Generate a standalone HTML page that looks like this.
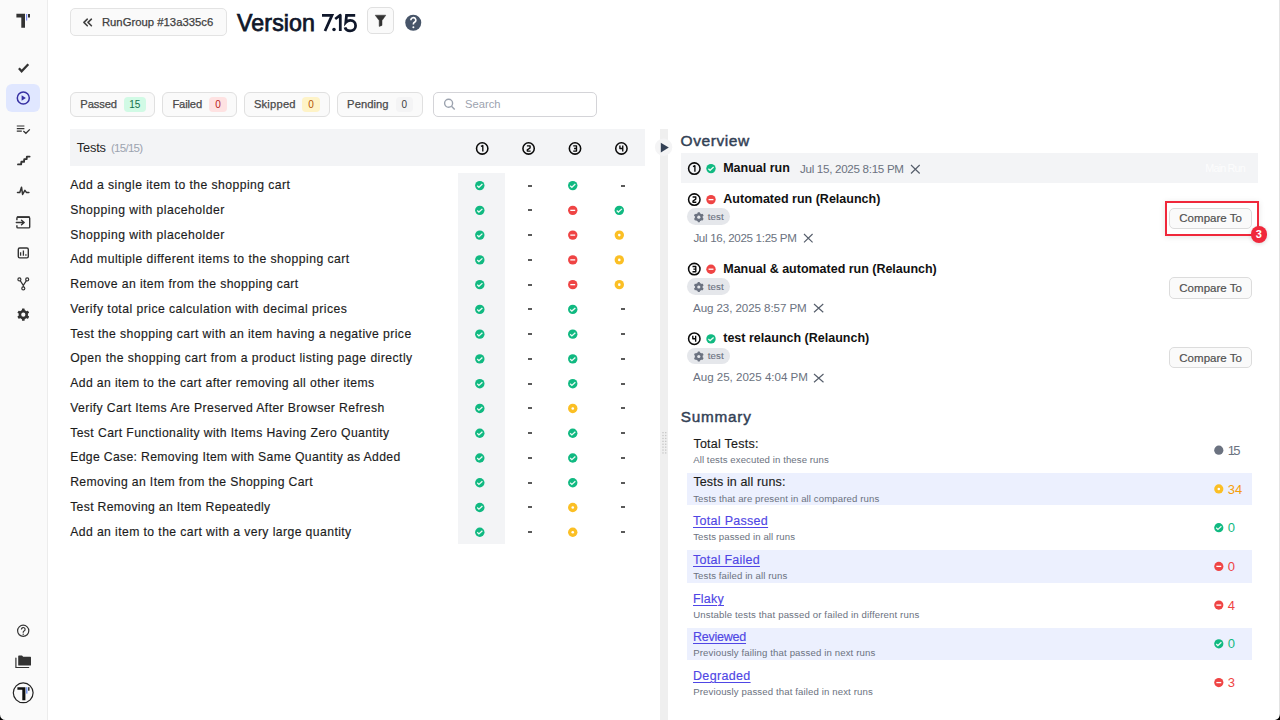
<!DOCTYPE html>
<html><head><meta charset="utf-8"><style>
html,body{margin:0;padding:0;width:1280px;height:720px;overflow:hidden;background:#fff;}
body{position:relative;font-family:'Liberation Sans', sans-serif;}
span{white-space:nowrap;}
svg{overflow:visible}
</style></head><body>
<div style="position:absolute;left:0px;top:0px;width:47px;height:720px;background:#fafafa"></div><div style="position:absolute;left:47px;top:0px;width:1px;height:720px;background:#ececec"></div><svg style="position:absolute;left:10px;top:8px" width="26" height="26" viewBox="10 8 26 26"><path d="M16.4 13.8H25V27.8H21.3V17.5H16.4z" fill="#333"/><rect x="26" y="14" width="1.2" height="6.5" fill="#7b8cf0"/><rect x="28" y="14" width="2" height="3.5" fill="#333"/></svg><svg style="position:absolute;left:10px;top:55px" width="28" height="25" viewBox="10 55 28 25"><path d="M18.9 68.3L21.6 71.2L28.3 64.2" fill="none" stroke="#333" stroke-width="2.3"/></svg><div style="position:absolute;left:6px;top:84px;width:34px;height:28px;background:#e0e7ff;border-radius:6px"></div><svg style="position:absolute;left:10px;top:86px" width="28" height="24" viewBox="10 86 28 24"><circle cx="23.3" cy="98" r="6" fill="none" stroke="#3730a3" stroke-width="1.5"/><path d="M21.6 95.2L25.9 98L21.6 100.8z" fill="#3730a3"/></svg><svg style="position:absolute;left:10px;top:118px" width="28" height="22" viewBox="10 118 28 22"><path d="M16.8 126H24.4M16.8 128.6H24.4M16.8 131.2H21.8" stroke="#333" stroke-width="1.2"/><path d="M23.4 131L25.9 133.3L29.8 129.4" fill="none" stroke="#333" stroke-width="1.3"/></svg><svg style="position:absolute;left:10px;top:150px" width="28" height="22" viewBox="10 150 28 22"><path d="M18 164.4H21.1L21.4 161.8H24L24.3 159.1H26.6L26.9 156.6H29.6" fill="none" stroke="#333" stroke-width="1.9" stroke-linecap="round" stroke-linejoin="round"/></svg><svg style="position:absolute;left:10px;top:180px" width="28" height="20" viewBox="10 180 28 20"><path d="M17.5 192.4H19.8L21.5 187.2L22.6 194.4L24.9 190.4L26.4 192.4H28.9" fill="none" stroke="#333" stroke-width="1.5" stroke-linecap="round" stroke-linejoin="round"/></svg><svg style="position:absolute;left:10px;top:210px" width="28" height="24" viewBox="10 210 28 24"><path d="M16.9 220.2V218.3Q16.9 217.3 17.9 217.3H28.8Q29.7 217.3 29.7 218.3V226.9Q29.7 227.9 28.8 227.9H17.9Q16.9 227.9 16.9 226.9V225.3" fill="none" stroke="#333" stroke-width="1.4"/><path d="M16.9 217.1H29.7" stroke="#333" stroke-width="1.8"/><path d="M16.3 222.5H24.2M21.5 220.2L24.2 222.5L21.5 224.8" fill="none" stroke="#333" stroke-width="1.4" stroke-linecap="round" stroke-linejoin="round"/></svg><svg style="position:absolute;left:10px;top:242px" width="28" height="22" viewBox="10 242 28 22"><rect x="18.3" y="248" width="10" height="9.9" rx="1.4" fill="none" stroke="#333" stroke-width="1.4"/><path d="M20.6 252.2V255.8M23.4 250.4V255.8M25.9 254.3V255.8" stroke="#333" stroke-width="1.3"/></svg><svg style="position:absolute;left:10px;top:272px" width="28" height="22" viewBox="10 272 28 22"><circle cx="19.4" cy="279.4" r="1.5" fill="none" stroke="#333" stroke-width="1.2"/><circle cx="27.2" cy="279.4" r="1.5" fill="none" stroke="#333" stroke-width="1.2"/><circle cx="23.3" cy="288.4" r="1.5" fill="none" stroke="#333" stroke-width="1.2"/><path d="M20.2 280.7L23.3 285.4L26.4 280.7M23.3 285.4V286.9" fill="none" stroke="#333" stroke-width="1.2"/></svg><svg style="position:absolute;left:10px;top:302px" width="28" height="26" viewBox="10 302 28 26"><g transform="translate(23.3 314.7)"><circle r="4.7" fill="#333"/><rect x="-1.35" y="-6.1" width="2.7" height="3" rx="0.5" fill="#333" transform="rotate(0)"/><rect x="-1.35" y="-6.1" width="2.7" height="3" rx="0.5" fill="#333" transform="rotate(60)"/><rect x="-1.35" y="-6.1" width="2.7" height="3" rx="0.5" fill="#333" transform="rotate(120)"/><rect x="-1.35" y="-6.1" width="2.7" height="3" rx="0.5" fill="#333" transform="rotate(180)"/><rect x="-1.35" y="-6.1" width="2.7" height="3" rx="0.5" fill="#333" transform="rotate(240)"/><rect x="-1.35" y="-6.1" width="2.7" height="3" rx="0.5" fill="#333" transform="rotate(300)"/><circle r="2.1" fill="#fafafa"/></g></svg><svg style="position:absolute;left:10px;top:618px" width="28" height="26" viewBox="10 618 28 26"><circle cx="23.2" cy="630.8" r="5.6" fill="none" stroke="#333" stroke-width="1.2"/><path d="M21.4 629.4A1.85 1.85 0 1 1 24.1 631C23.5 631.3 23.2 631.7 23.2 632.4V632.7" fill="none" stroke="#333" stroke-width="1.2"/><circle cx="23.2" cy="634.3" r="0.7" fill="#333"/></svg><svg style="position:absolute;left:10px;top:650px" width="28" height="22" viewBox="10 650 28 22"><path d="M15.9 658V667.5H28.7" fill="none" stroke="#333" stroke-width="1.2" stroke-linecap="round"/><path d="M18.2 656.3Q18.2 655.6 18.9 655.6H22L23.2 656.8H30.4Q31 656.8 31 657.4V664.9Q31 665.5 30.4 665.5H18.8Q18.2 665.5 18.2 664.9z" fill="#333"/></svg><svg style="position:absolute;left:8px;top:678px" width="32" height="30" viewBox="8 678 32 30"><circle cx="23.2" cy="692.8" r="9.9" fill="none" stroke="#222" stroke-width="1.2"/><path d="M17.4 687.2H25.4V700.2H22.3V689.7H17.4z" fill="#111"/><rect x="26" y="687.2" width="1.5" height="6.4" fill="#7b9cf2"/><rect x="28.1" y="687.2" width="1.4" height="3.5" fill="#222"/></svg><div style="position:absolute;left:70px;top:8px;width:157px;height:28px;box-sizing:border-box;border:1px solid #e3e3e3;background:#fafafa;border-radius:5px"></div><svg style="position:absolute;left:78px;top:12px" width="20" height="20" viewBox="78 12 20 20"><path d="M87.3 19.2L83.9 22.4L87.3 25.7M91.4 19.2L88 22.4L91.4 25.7" fill="none" stroke="#404040" stroke-width="1.6" stroke-linecap="round" stroke-linejoin="round"/></svg><svg style="position:absolute;left:318px;top:10px" width="42" height="24" viewBox="318 10 42 24"><g fill="none" stroke="#0f172a" stroke-width="2.75"><path d="M322 15.35H332L325 31"/><path d="M335.2 19L340.3 15.2V31" stroke-linejoin="round"/><path d="M355.2 15.35H346.5L345.8 22.4C347 21 348.6 20.4 350.3 20.4C353.6 20.4 355.6 22.8 355.6 25.7C355.6 28.8 353.3 30.8 350.1 30.8C347.5 30.8 345.6 29.4 345 27.3"/></g><circle cx="334" cy="29.5" r="1.75" fill="#0f172a"/></svg><div style="position:absolute;left:366.5px;top:7.2px;width:27.5px;height:27.3px;box-sizing:border-box;border:1px solid #e0e0e0;background:#fafafa;border-radius:5px"></div><svg style="position:absolute;left:370px;top:10px" width="22" height="22" viewBox="370 10 22 22"><path d="M375.2 15.2H385.8L382 20.6V25.4L379.2 26.4V20.6z" fill="#333" stroke="#333" stroke-width="0.5" stroke-linejoin="round"/></svg><svg style="position:absolute;left:402px;top:12px" width="22" height="22" viewBox="402 12 22 22"><circle cx="413.25" cy="22.75" r="8" fill="#475569"/><path d="M410.9 20.3A2.45 2.45 0 1 1 414.5 22.3C413.8 22.7 413.4 23.1 413.4 23.9V24.6" fill="none" stroke="#fff" stroke-width="1.6"/><circle cx="413.4" cy="27.3" r="1" fill="#fff"/></svg><div style="position:absolute;left:70px;top:92px;width:85.30000000000001px;height:24.5px;box-sizing:border-box;border:1px solid #e0e0e0;background:#fafafa;border-radius:6px"></div><div style="position:absolute;left:123.9px;top:96.6px;width:21.900000000000006px;height:15.600000000000009px;background:#d1fae5;border-radius:4px"></div><div style="position:absolute;left:123.9px;top:96.6px;width:21.900000000000006px;height:15.6px;text-align:center;font:400 10px 'Liberation Sans', sans-serif;line-height:15.6px;color:#15704d">15</div><div style="position:absolute;left:162.1px;top:92px;width:74.5px;height:24.5px;box-sizing:border-box;border:1px solid #e0e0e0;background:#fafafa;border-radius:6px"></div><div style="position:absolute;left:209.2px;top:96.6px;width:17.80000000000001px;height:15.600000000000009px;background:#fee2e2;border-radius:4px"></div><div style="position:absolute;left:209.2px;top:96.6px;width:17.80000000000001px;height:15.6px;text-align:center;font:400 10px 'Liberation Sans', sans-serif;line-height:15.6px;color:#b91c1c">0</div><div style="position:absolute;left:243.5px;top:92px;width:86.5px;height:24.5px;box-sizing:border-box;border:1px solid #e0e0e0;background:#fafafa;border-radius:6px"></div><div style="position:absolute;left:302px;top:96.6px;width:18.19999999999999px;height:15.600000000000009px;background:#fef3c7;border-radius:4px"></div><div style="position:absolute;left:302px;top:96.6px;width:18.19999999999999px;height:15.6px;text-align:center;font:400 10px 'Liberation Sans', sans-serif;line-height:15.6px;color:#b45309">0</div><div style="position:absolute;left:337.1px;top:92px;width:86.09999999999997px;height:24.5px;box-sizing:border-box;border:1px solid #e0e0e0;background:#fafafa;border-radius:6px"></div><div style="position:absolute;left:396px;top:96.6px;width:16.69999999999999px;height:15.600000000000009px;background:#f4f4f5;border-radius:4px"></div><div style="position:absolute;left:396px;top:96.6px;width:16.69999999999999px;height:15.6px;text-align:center;font:400 10px 'Liberation Sans', sans-serif;line-height:15.6px;color:#404040">0</div><div style="position:absolute;left:433.2px;top:92px;width:164.3px;height:24.799999999999997px;box-sizing:border-box;border:1px solid #d4d4d8;background:#fff;border-radius:5px"></div><svg style="position:absolute;left:443px;top:98px;" width="14" height="13" viewBox="0 0 14 13"><circle cx="5.6" cy="5.3" r="4" fill="none" stroke="#9ca3af" stroke-width="1.4"/><path d="M8.5 8.3l3.2 3.2" stroke="#9ca3af" stroke-width="1.5"/></svg><div style="position:absolute;left:70px;top:129.4px;width:574.8px;height:36.400000000000006px;background:#f3f4f6"></div><svg style="position:absolute;left:472px;top:138px" width="20" height="20" viewBox="472 138 20 20"><circle cx="482.2" cy="148.45" r="5.675" fill="none" stroke="#0a0a0a" stroke-width="1.55"/><path transform="translate(482.2 148.45)" d="M-1.3 -2.0L0.6 -2.9V3.1" fill="none" stroke="#0a0a0a" stroke-width="1.35" stroke-linejoin="round"/></svg><svg style="position:absolute;left:519px;top:138px" width="20" height="20" viewBox="519 138 20 20"><circle cx="528.6" cy="148.45" r="5.675" fill="none" stroke="#0a0a0a" stroke-width="1.55"/><path transform="translate(528.6 148.45)" d="M-1.7 -2.6H1.5V-0.5L-1.3 1.4V2.6H2.0" fill="none" stroke="#0a0a0a" stroke-width="1.35" stroke-linejoin="round"/></svg><svg style="position:absolute;left:565px;top:138px" width="20" height="20" viewBox="565 138 20 20"><circle cx="575" cy="148.45" r="5.675" fill="none" stroke="#0a0a0a" stroke-width="1.55"/><path transform="translate(575 148.45)" d="M-1.8 -2.6H1.5V2.6H-1.8M-0.9 0H1.5" fill="none" stroke="#0a0a0a" stroke-width="1.35" stroke-linejoin="round"/></svg><svg style="position:absolute;left:611px;top:138px" width="20" height="20" viewBox="611 138 20 20"><circle cx="621.4" cy="148.45" r="5.675" fill="none" stroke="#0a0a0a" stroke-width="1.55"/><path transform="translate(621.4 148.45)" d="M-1.5 -3V0H1.9M1.35 -3V3" fill="none" stroke="#0a0a0a" stroke-width="1.35" stroke-linejoin="round"/></svg><div style="position:absolute;left:458.2px;top:172.9px;width:46.400000000000034px;height:371.1px;background:#f3f4f6"></div><svg style="position:absolute;left:472px;top:178px" width="15" height="15" viewBox="472 178 15 15"><circle cx="479.8" cy="185.6" r="4.7" fill="#10b981"/><path d="M477.2 185.7L478.90000000000003 187.29999999999998L482.40000000000003 184.1" fill="none" stroke="#fff" stroke-opacity="0.92" stroke-width="1.3"/></svg><div style="position:absolute;left:528px;top:185px;width:4px;height:2px;background:#5a5a5a"></div><svg style="position:absolute;left:565px;top:178px" width="15" height="15" viewBox="565 178 15 15"><circle cx="572.75" cy="185.6" r="4.7" fill="#10b981"/><path d="M570.15 185.7L571.85 187.29999999999998L575.35 184.1" fill="none" stroke="#fff" stroke-opacity="0.92" stroke-width="1.3"/></svg><div style="position:absolute;left:621px;top:185px;width:4px;height:2px;background:#5a5a5a"></div><svg style="position:absolute;left:472px;top:203px" width="15" height="15" viewBox="472 203 15 15"><circle cx="479.8" cy="210.35999999999999" r="4.7" fill="#10b981"/><path d="M477.2 210.45999999999998L478.90000000000003 212.05999999999997L482.40000000000003 208.85999999999999" fill="none" stroke="#fff" stroke-opacity="0.92" stroke-width="1.3"/></svg><div style="position:absolute;left:528px;top:209px;width:4px;height:2px;background:#5a5a5a"></div><svg style="position:absolute;left:565px;top:203px" width="15" height="15" viewBox="565 203 15 15"><circle cx="572.75" cy="210.35999999999999" r="4.7" fill="#ef4444"/><rect x="570.3" y="209.70999999999998" width="4.9" height="1.3" fill="#fff"/></svg><svg style="position:absolute;left:612px;top:203px" width="15" height="15" viewBox="612 203 15 15"><circle cx="619.3" cy="210.35999999999999" r="4.7" fill="#10b981"/><path d="M616.6999999999999 210.45999999999998L618.4 212.05999999999997L621.9 208.85999999999999" fill="none" stroke="#fff" stroke-opacity="0.92" stroke-width="1.3"/></svg><svg style="position:absolute;left:472px;top:228px" width="15" height="15" viewBox="472 228 15 15"><circle cx="479.8" cy="235.12" r="4.7" fill="#10b981"/><path d="M477.2 235.22L478.90000000000003 236.82L482.40000000000003 233.62" fill="none" stroke="#fff" stroke-opacity="0.92" stroke-width="1.3"/></svg><div style="position:absolute;left:528px;top:234px;width:4px;height:2px;background:#5a5a5a"></div><svg style="position:absolute;left:565px;top:228px" width="15" height="15" viewBox="565 228 15 15"><circle cx="572.75" cy="235.12" r="4.7" fill="#ef4444"/><rect x="570.3" y="234.47" width="4.9" height="1.3" fill="#fff"/></svg><svg style="position:absolute;left:612px;top:228px" width="15" height="15" viewBox="612 228 15 15"><circle cx="619.3" cy="235.12" r="4.7" fill="#fbbf24"/><circle cx="619.3" cy="235.12" r="1.3" fill="#fff"/></svg><svg style="position:absolute;left:472px;top:252px" width="15" height="15" viewBox="472 252 15 15"><circle cx="479.8" cy="259.88" r="4.7" fill="#10b981"/><path d="M477.2 259.98L478.90000000000003 261.58L482.40000000000003 258.38" fill="none" stroke="#fff" stroke-opacity="0.92" stroke-width="1.3"/></svg><div style="position:absolute;left:528px;top:259px;width:4px;height:2px;background:#5a5a5a"></div><svg style="position:absolute;left:565px;top:252px" width="15" height="15" viewBox="565 252 15 15"><circle cx="572.75" cy="259.88" r="4.7" fill="#ef4444"/><rect x="570.3" y="259.23" width="4.9" height="1.3" fill="#fff"/></svg><svg style="position:absolute;left:612px;top:252px" width="15" height="15" viewBox="612 252 15 15"><circle cx="619.3" cy="259.88" r="4.7" fill="#fbbf24"/><circle cx="619.3" cy="259.88" r="1.3" fill="#fff"/></svg><svg style="position:absolute;left:472px;top:277px" width="15" height="15" viewBox="472 277 15 15"><circle cx="479.8" cy="284.64" r="4.7" fill="#10b981"/><path d="M477.2 284.74L478.90000000000003 286.34L482.40000000000003 283.14" fill="none" stroke="#fff" stroke-opacity="0.92" stroke-width="1.3"/></svg><div style="position:absolute;left:528px;top:284px;width:4px;height:2px;background:#5a5a5a"></div><svg style="position:absolute;left:565px;top:277px" width="15" height="15" viewBox="565 277 15 15"><circle cx="572.75" cy="284.64" r="4.7" fill="#ef4444"/><rect x="570.3" y="283.99" width="4.9" height="1.3" fill="#fff"/></svg><svg style="position:absolute;left:612px;top:277px" width="15" height="15" viewBox="612 277 15 15"><circle cx="619.3" cy="284.64" r="4.7" fill="#fbbf24"/><circle cx="619.3" cy="284.64" r="1.3" fill="#fff"/></svg><svg style="position:absolute;left:472px;top:302px" width="15" height="15" viewBox="472 302 15 15"><circle cx="479.8" cy="309.4" r="4.7" fill="#10b981"/><path d="M477.2 309.5L478.90000000000003 311.09999999999997L482.40000000000003 307.9" fill="none" stroke="#fff" stroke-opacity="0.92" stroke-width="1.3"/></svg><div style="position:absolute;left:528px;top:308px;width:4px;height:2px;background:#5a5a5a"></div><svg style="position:absolute;left:565px;top:302px" width="15" height="15" viewBox="565 302 15 15"><circle cx="572.75" cy="309.4" r="4.7" fill="#10b981"/><path d="M570.15 309.5L571.85 311.09999999999997L575.35 307.9" fill="none" stroke="#fff" stroke-opacity="0.92" stroke-width="1.3"/></svg><div style="position:absolute;left:621px;top:308px;width:4px;height:2px;background:#5a5a5a"></div><svg style="position:absolute;left:472px;top:327px" width="15" height="15" viewBox="472 327 15 15"><circle cx="479.8" cy="334.15999999999997" r="4.7" fill="#10b981"/><path d="M477.2 334.26L478.90000000000003 335.85999999999996L482.40000000000003 332.65999999999997" fill="none" stroke="#fff" stroke-opacity="0.92" stroke-width="1.3"/></svg><div style="position:absolute;left:528px;top:333px;width:4px;height:2px;background:#5a5a5a"></div><svg style="position:absolute;left:565px;top:327px" width="15" height="15" viewBox="565 327 15 15"><circle cx="572.75" cy="334.15999999999997" r="4.7" fill="#10b981"/><path d="M570.15 334.26L571.85 335.85999999999996L575.35 332.65999999999997" fill="none" stroke="#fff" stroke-opacity="0.92" stroke-width="1.3"/></svg><div style="position:absolute;left:621px;top:333px;width:4px;height:2px;background:#5a5a5a"></div><svg style="position:absolute;left:472px;top:351px" width="15" height="15" viewBox="472 351 15 15"><circle cx="479.8" cy="358.92" r="4.7" fill="#10b981"/><path d="M477.2 359.02000000000004L478.90000000000003 360.62L482.40000000000003 357.42" fill="none" stroke="#fff" stroke-opacity="0.92" stroke-width="1.3"/></svg><div style="position:absolute;left:528px;top:358px;width:4px;height:2px;background:#5a5a5a"></div><svg style="position:absolute;left:565px;top:351px" width="15" height="15" viewBox="565 351 15 15"><circle cx="572.75" cy="358.92" r="4.7" fill="#10b981"/><path d="M570.15 359.02000000000004L571.85 360.62L575.35 357.42" fill="none" stroke="#fff" stroke-opacity="0.92" stroke-width="1.3"/></svg><div style="position:absolute;left:621px;top:358px;width:4px;height:2px;background:#5a5a5a"></div><svg style="position:absolute;left:472px;top:376px" width="15" height="15" viewBox="472 376 15 15"><circle cx="479.8" cy="383.68" r="4.7" fill="#10b981"/><path d="M477.2 383.78000000000003L478.90000000000003 385.38L482.40000000000003 382.18" fill="none" stroke="#fff" stroke-opacity="0.92" stroke-width="1.3"/></svg><div style="position:absolute;left:528px;top:383px;width:4px;height:2px;background:#5a5a5a"></div><svg style="position:absolute;left:565px;top:376px" width="15" height="15" viewBox="565 376 15 15"><circle cx="572.75" cy="383.68" r="4.7" fill="#10b981"/><path d="M570.15 383.78000000000003L571.85 385.38L575.35 382.18" fill="none" stroke="#fff" stroke-opacity="0.92" stroke-width="1.3"/></svg><div style="position:absolute;left:621px;top:383px;width:4px;height:2px;background:#5a5a5a"></div><svg style="position:absolute;left:472px;top:401px" width="15" height="15" viewBox="472 401 15 15"><circle cx="479.8" cy="408.44" r="4.7" fill="#10b981"/><path d="M477.2 408.54L478.90000000000003 410.14L482.40000000000003 406.94" fill="none" stroke="#fff" stroke-opacity="0.92" stroke-width="1.3"/></svg><div style="position:absolute;left:528px;top:407px;width:4px;height:2px;background:#5a5a5a"></div><svg style="position:absolute;left:565px;top:401px" width="15" height="15" viewBox="565 401 15 15"><circle cx="572.75" cy="408.44" r="4.7" fill="#fbbf24"/><circle cx="572.75" cy="408.44" r="1.3" fill="#fff"/></svg><div style="position:absolute;left:621px;top:407px;width:4px;height:2px;background:#5a5a5a"></div><svg style="position:absolute;left:472px;top:426px" width="15" height="15" viewBox="472 426 15 15"><circle cx="479.8" cy="433.20000000000005" r="4.7" fill="#10b981"/><path d="M477.2 433.30000000000007L478.90000000000003 434.90000000000003L482.40000000000003 431.70000000000005" fill="none" stroke="#fff" stroke-opacity="0.92" stroke-width="1.3"/></svg><div style="position:absolute;left:528px;top:432px;width:4px;height:2px;background:#5a5a5a"></div><svg style="position:absolute;left:565px;top:426px" width="15" height="15" viewBox="565 426 15 15"><circle cx="572.75" cy="433.20000000000005" r="4.7" fill="#10b981"/><path d="M570.15 433.30000000000007L571.85 434.90000000000003L575.35 431.70000000000005" fill="none" stroke="#fff" stroke-opacity="0.92" stroke-width="1.3"/></svg><div style="position:absolute;left:621px;top:432px;width:4px;height:2px;background:#5a5a5a"></div><svg style="position:absolute;left:472px;top:450px" width="15" height="15" viewBox="472 450 15 15"><circle cx="479.8" cy="457.96000000000004" r="4.7" fill="#10b981"/><path d="M477.2 458.06000000000006L478.90000000000003 459.66L482.40000000000003 456.46000000000004" fill="none" stroke="#fff" stroke-opacity="0.92" stroke-width="1.3"/></svg><div style="position:absolute;left:528px;top:457px;width:4px;height:2px;background:#5a5a5a"></div><svg style="position:absolute;left:565px;top:450px" width="15" height="15" viewBox="565 450 15 15"><circle cx="572.75" cy="457.96000000000004" r="4.7" fill="#10b981"/><path d="M570.15 458.06000000000006L571.85 459.66L575.35 456.46000000000004" fill="none" stroke="#fff" stroke-opacity="0.92" stroke-width="1.3"/></svg><div style="position:absolute;left:621px;top:457px;width:4px;height:2px;background:#5a5a5a"></div><svg style="position:absolute;left:472px;top:475px" width="15" height="15" viewBox="472 475 15 15"><circle cx="479.8" cy="482.72" r="4.7" fill="#10b981"/><path d="M477.2 482.82000000000005L478.90000000000003 484.42L482.40000000000003 481.22" fill="none" stroke="#fff" stroke-opacity="0.92" stroke-width="1.3"/></svg><div style="position:absolute;left:528px;top:482px;width:4px;height:2px;background:#5a5a5a"></div><svg style="position:absolute;left:565px;top:475px" width="15" height="15" viewBox="565 475 15 15"><circle cx="572.75" cy="482.72" r="4.7" fill="#10b981"/><path d="M570.15 482.82000000000005L571.85 484.42L575.35 481.22" fill="none" stroke="#fff" stroke-opacity="0.92" stroke-width="1.3"/></svg><div style="position:absolute;left:621px;top:482px;width:4px;height:2px;background:#5a5a5a"></div><svg style="position:absolute;left:472px;top:500px" width="15" height="15" viewBox="472 500 15 15"><circle cx="479.8" cy="507.48" r="4.7" fill="#10b981"/><path d="M477.2 507.58000000000004L478.90000000000003 509.18L482.40000000000003 505.98" fill="none" stroke="#fff" stroke-opacity="0.92" stroke-width="1.3"/></svg><div style="position:absolute;left:528px;top:506px;width:4px;height:2px;background:#5a5a5a"></div><svg style="position:absolute;left:565px;top:500px" width="15" height="15" viewBox="565 500 15 15"><circle cx="572.75" cy="507.48" r="4.7" fill="#fbbf24"/><circle cx="572.75" cy="507.48" r="1.3" fill="#fff"/></svg><div style="position:absolute;left:621px;top:506px;width:4px;height:2px;background:#5a5a5a"></div><svg style="position:absolute;left:472px;top:525px" width="15" height="15" viewBox="472 525 15 15"><circle cx="479.8" cy="532.24" r="4.7" fill="#10b981"/><path d="M477.2 532.34L478.90000000000003 533.94L482.40000000000003 530.74" fill="none" stroke="#fff" stroke-opacity="0.92" stroke-width="1.3"/></svg><div style="position:absolute;left:528px;top:531px;width:4px;height:2px;background:#5a5a5a"></div><svg style="position:absolute;left:565px;top:525px" width="15" height="15" viewBox="565 525 15 15"><circle cx="572.75" cy="532.24" r="4.7" fill="#fbbf24"/><circle cx="572.75" cy="532.24" r="1.3" fill="#fff"/></svg><div style="position:absolute;left:621px;top:531px;width:4px;height:2px;background:#5a5a5a"></div><div style="position:absolute;left:660.3px;top:129.4px;width:7.5px;height:590.6px;background:#efefef"></div><svg style="position:absolute;left:653px;top:137px" width="21" height="21" viewBox="653 137 21 21"><circle cx="663.6" cy="147.2" r="8.7" fill="#f4f4f5"/><path d="M660.8 142.7L668.8 147.5L660.8 152.4z" fill="#334155"/></svg><svg style="position:absolute;left:661.7px;top:430.5px;" width="5" height="25" viewBox="0 0 5 25"><rect x="0.3" y="1.0" width="1.4" height="1.3" fill="#c8c8c8"/><rect x="3.0" y="1.0" width="1.4" height="1.3" fill="#c8c8c8"/><rect x="0.3" y="3.9" width="1.4" height="1.3" fill="#c8c8c8"/><rect x="3.0" y="3.9" width="1.4" height="1.3" fill="#c8c8c8"/><rect x="0.3" y="6.8" width="1.4" height="1.3" fill="#c8c8c8"/><rect x="3.0" y="6.8" width="1.4" height="1.3" fill="#c8c8c8"/><rect x="0.3" y="9.7" width="1.4" height="1.3" fill="#c8c8c8"/><rect x="3.0" y="9.7" width="1.4" height="1.3" fill="#c8c8c8"/><rect x="0.3" y="12.6" width="1.4" height="1.3" fill="#c8c8c8"/><rect x="3.0" y="12.6" width="1.4" height="1.3" fill="#c8c8c8"/><rect x="0.3" y="15.5" width="1.4" height="1.3" fill="#c8c8c8"/><rect x="3.0" y="15.5" width="1.4" height="1.3" fill="#c8c8c8"/><rect x="0.3" y="18.4" width="1.4" height="1.3" fill="#c8c8c8"/><rect x="3.0" y="18.4" width="1.4" height="1.3" fill="#c8c8c8"/><rect x="0.3" y="21.3" width="1.4" height="1.3" fill="#c8c8c8"/><rect x="3.0" y="21.3" width="1.4" height="1.3" fill="#c8c8c8"/></svg><div style="position:absolute;left:680.6px;top:152.5px;width:577.6px;height:30.5px;background:#f3f4f6"></div><svg style="position:absolute;left:684px;top:159px" width="20" height="20" viewBox="684 159 20 20"><circle cx="694.3" cy="168.6" r="5.725" fill="none" stroke="#0a0a0a" stroke-width="1.55"/><path transform="translate(694.3 168.6)" d="M-1.3 -2.0L0.6 -2.9V3.1" fill="none" stroke="#0a0a0a" stroke-width="1.35" stroke-linejoin="round"/></svg><svg style="position:absolute;left:704px;top:161px" width="14" height="15" viewBox="704 161 14 15"><circle cx="711" cy="168.6" r="4.7" fill="#10b981"/><path d="M708.4 168.7L710.1 170.29999999999998L713.6 167.1" fill="none" stroke="#fff" stroke-opacity="0.92" stroke-width="1.3"/></svg><svg style="position:absolute;left:909.7px;top:163.6px;" width="10.699999999999932" height="10.5" viewBox="0 0 10.699999999999932 10.5"><path d="M1 1L9.699999999999932 9.5M9.699999999999932 1L1 9.5" stroke="#565e6b" stroke-width="1.15"/></svg><svg style="position:absolute;left:684px;top:190px" width="20" height="20" viewBox="684 190 20 20"><circle cx="694.3" cy="199.6" r="5.725" fill="none" stroke="#0a0a0a" stroke-width="1.55"/><path transform="translate(694.3 199.6)" d="M-1.7 -2.6H1.5V-0.5L-1.3 1.4V2.6H2.0" fill="none" stroke="#0a0a0a" stroke-width="1.35" stroke-linejoin="round"/></svg><svg style="position:absolute;left:704px;top:192px" width="14" height="15" viewBox="704 192 14 15"><circle cx="711" cy="199.6" r="4.7" fill="#ef4444"/><rect x="708.55" y="198.95" width="4.9" height="1.3" fill="#fff"/></svg><div style="position:absolute;left:687px;top:208.2px;width:43.200000000000045px;height:16.80000000000001px;background:#e5e7eb;border-radius:9px"></div><svg style="position:absolute;left:692px;top:210px" width="14" height="15" viewBox="692 210 14 15"><g transform="translate(698.8 217.2)"><circle r="3.9" fill="#6b7280"/><rect x="-1.15" y="-5" width="2.3" height="2.6" rx="0.4" fill="#6b7280" transform="rotate(0)"/><rect x="-1.15" y="-5" width="2.3" height="2.6" rx="0.4" fill="#6b7280" transform="rotate(60)"/><rect x="-1.15" y="-5" width="2.3" height="2.6" rx="0.4" fill="#6b7280" transform="rotate(120)"/><rect x="-1.15" y="-5" width="2.3" height="2.6" rx="0.4" fill="#6b7280" transform="rotate(180)"/><rect x="-1.15" y="-5" width="2.3" height="2.6" rx="0.4" fill="#6b7280" transform="rotate(240)"/><rect x="-1.15" y="-5" width="2.3" height="2.6" rx="0.4" fill="#6b7280" transform="rotate(300)"/><circle r="1.6" fill="#e5e7eb"/></g></svg><svg style="position:absolute;left:803.1px;top:233.3px;" width="10.600000000000023" height="10.299999999999983" viewBox="0 0 10.600000000000023 10.299999999999983"><path d="M1 1L9.600000000000023 9.299999999999983M9.600000000000023 1L1 9.299999999999983" stroke="#565e6b" stroke-width="1.15"/></svg><div style="position:absolute;left:1169.3px;top:207.5px;width:82.70000000000005px;height:21.30000000000001px;box-sizing:border-box;border:1px solid #dcdcdc;background:#fafafa;border-radius:5px"></div><svg style="position:absolute;left:684px;top:259px" width="20" height="20" viewBox="684 259 20 20"><circle cx="694.3" cy="269.1" r="5.725" fill="none" stroke="#0a0a0a" stroke-width="1.55"/><path transform="translate(694.3 269.1)" d="M-1.8 -2.6H1.5V2.6H-1.8M-0.9 0H1.5" fill="none" stroke="#0a0a0a" stroke-width="1.35" stroke-linejoin="round"/></svg><svg style="position:absolute;left:704px;top:262px" width="14" height="15" viewBox="704 262 14 15"><circle cx="711" cy="269.2" r="4.7" fill="#ef4444"/><rect x="708.55" y="268.55" width="4.9" height="1.3" fill="#fff"/></svg><div style="position:absolute;left:687px;top:278px;width:43.200000000000045px;height:16.80000000000001px;background:#e5e7eb;border-radius:9px"></div><svg style="position:absolute;left:692px;top:280px" width="14" height="14" viewBox="692 280 14 14"><g transform="translate(698.8 287)"><circle r="3.9" fill="#6b7280"/><rect x="-1.15" y="-5" width="2.3" height="2.6" rx="0.4" fill="#6b7280" transform="rotate(0)"/><rect x="-1.15" y="-5" width="2.3" height="2.6" rx="0.4" fill="#6b7280" transform="rotate(60)"/><rect x="-1.15" y="-5" width="2.3" height="2.6" rx="0.4" fill="#6b7280" transform="rotate(120)"/><rect x="-1.15" y="-5" width="2.3" height="2.6" rx="0.4" fill="#6b7280" transform="rotate(180)"/><rect x="-1.15" y="-5" width="2.3" height="2.6" rx="0.4" fill="#6b7280" transform="rotate(240)"/><rect x="-1.15" y="-5" width="2.3" height="2.6" rx="0.4" fill="#6b7280" transform="rotate(300)"/><circle r="1.6" fill="#e5e7eb"/></g></svg><svg style="position:absolute;left:812.75px;top:303.3px;" width="11.25" height="10.300000000000011" viewBox="0 0 11.25 10.300000000000011"><path d="M1 1L10.25 9.300000000000011M10.25 1L1 9.300000000000011" stroke="#565e6b" stroke-width="1.15"/></svg><div style="position:absolute;left:1169.3px;top:277.2px;width:82.70000000000005px;height:21.400000000000034px;box-sizing:border-box;border:1px solid #dcdcdc;background:#fafafa;border-radius:5px"></div><svg style="position:absolute;left:684px;top:329px" width="20" height="20" viewBox="684 329 20 20"><circle cx="694.3" cy="338.7" r="5.725" fill="none" stroke="#0a0a0a" stroke-width="1.55"/><path transform="translate(694.3 338.7)" d="M-1.5 -3V0H1.9M1.35 -3V3" fill="none" stroke="#0a0a0a" stroke-width="1.35" stroke-linejoin="round"/></svg><svg style="position:absolute;left:704px;top:331px" width="14" height="15" viewBox="704 331 14 15"><circle cx="711" cy="338.9" r="4.7" fill="#10b981"/><path d="M708.4 339.0L710.1 340.59999999999997L713.6 337.4" fill="none" stroke="#fff" stroke-opacity="0.92" stroke-width="1.3"/></svg><div style="position:absolute;left:687px;top:347.5px;width:43.200000000000045px;height:16.80000000000001px;background:#e5e7eb;border-radius:9px"></div><svg style="position:absolute;left:692px;top:349px" width="14" height="15" viewBox="692 349 14 15"><g transform="translate(698.8 356.5)"><circle r="3.9" fill="#6b7280"/><rect x="-1.15" y="-5" width="2.3" height="2.6" rx="0.4" fill="#6b7280" transform="rotate(0)"/><rect x="-1.15" y="-5" width="2.3" height="2.6" rx="0.4" fill="#6b7280" transform="rotate(60)"/><rect x="-1.15" y="-5" width="2.3" height="2.6" rx="0.4" fill="#6b7280" transform="rotate(120)"/><rect x="-1.15" y="-5" width="2.3" height="2.6" rx="0.4" fill="#6b7280" transform="rotate(180)"/><rect x="-1.15" y="-5" width="2.3" height="2.6" rx="0.4" fill="#6b7280" transform="rotate(240)"/><rect x="-1.15" y="-5" width="2.3" height="2.6" rx="0.4" fill="#6b7280" transform="rotate(300)"/><circle r="1.6" fill="#e5e7eb"/></g></svg><svg style="position:absolute;left:813.25px;top:372.8px;" width="11.5" height="10.300000000000011" viewBox="0 0 11.5 10.300000000000011"><path d="M1 1L10.5 9.300000000000011M10.5 1L1 9.300000000000011" stroke="#565e6b" stroke-width="1.15"/></svg><div style="position:absolute;left:1169.3px;top:347.2px;width:82.70000000000005px;height:20.600000000000023px;box-sizing:border-box;border:1px solid #dcdcdc;background:#fafafa;border-radius:5px"></div><div style="position:absolute;left:1164.5px;top:200.75px;width:94.5px;height:35.0px;box-sizing:border-box;border:2px solid #f0283b;box-shadow:0 1px 6px rgba(0,0,0,0.10)"></div><div style="position:absolute;left:1250.5px;top:226.2px;width:16.5px;height:16.5px;border-radius:50%;background:#f0283b;box-shadow:0 1px 4px rgba(0,0,0,0.15);color:#fff;font:700 11px 'Liberation Sans', sans-serif;line-height:16.5px;text-align:center">3</div><svg style="position:absolute;left:1211px;top:443px" width="15" height="15" viewBox="1211 443 15 15"><circle cx="1218.8" cy="450.20000000000005" r="4.6" fill="#6b7280"/></svg><div style="position:absolute;left:686.5px;top:472.83000000000004px;width:565.5px;height:32.30000000000001px;background:#ecf0fe"></div><svg style="position:absolute;left:1211px;top:481px" width="15" height="15" viewBox="1211 481 15 15"><circle cx="1218.8" cy="488.93000000000006" r="4.6" fill="#fbbf24"/><circle cx="1218.8" cy="488.93000000000006" r="1.3" fill="#fff"/></svg><svg style="position:absolute;left:1211px;top:520px" width="15" height="15" viewBox="1211 520 15 15"><circle cx="1218.8" cy="527.6600000000001" r="4.6" fill="#10b981"/><path d="M1216.2 527.7600000000001L1217.8999999999999 529.3600000000001L1221.3999999999999 526.1600000000001" fill="none" stroke="#fff" stroke-opacity="0.92" stroke-width="1.3"/></svg><div style="position:absolute;left:686.5px;top:550.29px;width:565.5px;height:32.299999999999955px;background:#ecf0fe"></div><svg style="position:absolute;left:1211px;top:559px" width="15" height="15" viewBox="1211 559 15 15"><circle cx="1218.8" cy="566.39" r="4.6" fill="#ef4444"/><rect x="1216.35" y="565.74" width="4.9" height="1.3" fill="#fff"/></svg><svg style="position:absolute;left:1211px;top:598px" width="15" height="15" viewBox="1211 598 15 15"><circle cx="1218.8" cy="605.12" r="4.6" fill="#ef4444"/><rect x="1216.35" y="604.47" width="4.9" height="1.3" fill="#fff"/></svg><div style="position:absolute;left:686.5px;top:627.75px;width:565.5px;height:32.299999999999955px;background:#ecf0fe"></div><svg style="position:absolute;left:1211px;top:636px" width="15" height="15" viewBox="1211 636 15 15"><circle cx="1218.8" cy="643.85" r="4.6" fill="#10b981"/><path d="M1216.2 643.95L1217.8999999999999 645.5500000000001L1221.3999999999999 642.35" fill="none" stroke="#fff" stroke-opacity="0.92" stroke-width="1.3"/></svg><svg style="position:absolute;left:1211px;top:675px" width="15" height="15" viewBox="1211 675 15 15"><circle cx="1218.8" cy="682.58" r="4.6" fill="#ef4444"/><rect x="1216.35" y="681.9300000000001" width="4.9" height="1.3" fill="#fff"/></svg><div style="position:absolute;left:1278.7px;top:0px;width:1.2999999999999545px;height:720px;background:#e3e3e3"></div><svg style="position:absolute;left:0px;top:712px" width="8" height="8" viewBox="0 712 8 8"><path d="M0 720V714.5A5.5 5.5 0 0 0 5.5 720z" fill="#000"/></svg><svg style="position:absolute;left:1272px;top:710px" width="8" height="10" viewBox="1272 710 8 10"><path d="M1280 720V713A7 7 0 0 1 1275 720z" fill="#000"/></svg>
<span id="t0" style="position:absolute;left:101.9px;top:15px;font-size:11.3px;line-height:14px;font-weight:400;color:#404040;letter-spacing:0.013px;;-webkit-text-stroke:0.25px #404040">RunGroup #13a335c6</span><span id="t1" style="position:absolute;left:237px;top:9px;font-size:23.2px;line-height:29px;font-weight:400;color:#0f172a;letter-spacing:0.109px;;-webkit-text-stroke:0.75px #0f172a">Version</span><span id="t2" style="position:absolute;left:80.3px;top:97px;font-size:11.2px;line-height:14px;font-weight:400;color:#4a4a4a;letter-spacing:-0.106px;;-webkit-text-stroke:0.25px #4a4a4a">Passed</span><span id="t3" style="position:absolute;left:172.4px;top:97px;font-size:11.2px;line-height:14px;font-weight:400;color:#4a4a4a;letter-spacing:-0.137px;;-webkit-text-stroke:0.25px #4a4a4a">Failed</span><span id="t4" style="position:absolute;left:253.9px;top:97px;font-size:11.2px;line-height:14px;font-weight:400;color:#4a4a4a;letter-spacing:0.210px;;-webkit-text-stroke:0.25px #4a4a4a">Skipped</span><span id="t5" style="position:absolute;left:347.1px;top:97px;font-size:11.2px;line-height:14px;font-weight:400;color:#4a4a4a;letter-spacing:0.073px;;-webkit-text-stroke:0.25px #4a4a4a">Pending</span><span id="t6" style="position:absolute;left:465px;top:97px;font-size:11.2px;line-height:14px;font-weight:400;color:#9ca3af;letter-spacing:0.009px;">Search</span><span id="t7" style="position:absolute;left:76.7px;top:140px;font-size:12.8px;line-height:16px;font-weight:400;color:#262626;letter-spacing:-0.144px;">Tests</span><span id="t8" style="position:absolute;left:110.9px;top:141px;font-size:11.5px;line-height:14px;font-weight:400;color:#9ca3af;letter-spacing:-0.706px;">(15/15)</span><span id="t9" style="position:absolute;left:70.2px;top:178px;font-size:12.2px;line-height:15px;font-weight:400;color:#1c1c1c;letter-spacing:0.426px;;-webkit-text-stroke:0.15px #1c1c1c">Add a single item to the shopping cart</span><span id="t10" style="position:absolute;left:70.2px;top:203px;font-size:12.2px;line-height:15px;font-weight:400;color:#1c1c1c;letter-spacing:0.460px;;-webkit-text-stroke:0.15px #1c1c1c">Shopping with placeholder</span><span id="t11" style="position:absolute;left:70.2px;top:228px;font-size:12.2px;line-height:15px;font-weight:400;color:#1c1c1c;letter-spacing:0.460px;;-webkit-text-stroke:0.15px #1c1c1c">Shopping with placeholder</span><span id="t12" style="position:absolute;left:70.2px;top:252px;font-size:12.2px;line-height:15px;font-weight:400;color:#1c1c1c;letter-spacing:0.454px;;-webkit-text-stroke:0.15px #1c1c1c">Add multiple different items to the shopping cart</span><span id="t13" style="position:absolute;left:70.2px;top:277px;font-size:12.2px;line-height:15px;font-weight:400;color:#1c1c1c;letter-spacing:0.406px;;-webkit-text-stroke:0.15px #1c1c1c">Remove an item from the shopping cart</span><span id="t14" style="position:absolute;left:70.2px;top:302px;font-size:12.2px;line-height:15px;font-weight:400;color:#1c1c1c;letter-spacing:0.461px;;-webkit-text-stroke:0.15px #1c1c1c">Verify total price calculation with decimal prices</span><span id="t15" style="position:absolute;left:70.2px;top:327px;font-size:12.2px;line-height:15px;font-weight:400;color:#1c1c1c;letter-spacing:0.424px;;-webkit-text-stroke:0.15px #1c1c1c">Test the shopping cart with an item having a negative price</span><span id="t16" style="position:absolute;left:70.2px;top:351px;font-size:12.2px;line-height:15px;font-weight:400;color:#1c1c1c;letter-spacing:0.453px;;-webkit-text-stroke:0.15px #1c1c1c">Open the shopping cart from a product listing page directly</span><span id="t17" style="position:absolute;left:70.2px;top:376px;font-size:12.2px;line-height:15px;font-weight:400;color:#1c1c1c;letter-spacing:0.393px;;-webkit-text-stroke:0.15px #1c1c1c">Add an item to the cart after removing all other items</span><span id="t18" style="position:absolute;left:70.2px;top:401px;font-size:12.2px;line-height:15px;font-weight:400;color:#1c1c1c;letter-spacing:0.398px;;-webkit-text-stroke:0.15px #1c1c1c">Verify Cart Items Are Preserved After Browser Refresh</span><span id="t19" style="position:absolute;left:70.2px;top:426px;font-size:12.2px;line-height:15px;font-weight:400;color:#1c1c1c;letter-spacing:0.401px;;-webkit-text-stroke:0.15px #1c1c1c">Test Cart Functionality with Items Having Zero Quantity</span><span id="t20" style="position:absolute;left:70.2px;top:450px;font-size:12.2px;line-height:15px;font-weight:400;color:#1c1c1c;letter-spacing:0.347px;;-webkit-text-stroke:0.15px #1c1c1c">Edge Case: Removing Item with Same Quantity as Added</span><span id="t21" style="position:absolute;left:70.2px;top:475px;font-size:12.2px;line-height:15px;font-weight:400;color:#1c1c1c;letter-spacing:0.374px;;-webkit-text-stroke:0.15px #1c1c1c">Removing an Item from the Shopping Cart</span><span id="t22" style="position:absolute;left:70.2px;top:500px;font-size:12.2px;line-height:15px;font-weight:400;color:#1c1c1c;letter-spacing:0.333px;;-webkit-text-stroke:0.15px #1c1c1c">Test Removing an Item Repeatedly</span><span id="t23" style="position:absolute;left:70.2px;top:525px;font-size:12.2px;line-height:15px;font-weight:400;color:#1c1c1c;letter-spacing:0.412px;;-webkit-text-stroke:0.15px #1c1c1c">Add an item to the cart with a very large quantity</span><span id="t24" style="position:absolute;left:680.6px;top:131px;font-size:15.5px;line-height:19px;font-weight:400;color:#334155;letter-spacing:0.570px;;-webkit-text-stroke:0.45px #334155">Overview</span><span id="t25" style="position:absolute;left:1205.3px;top:161px;font-size:10.8px;line-height:14px;font-weight:400;color:rgba(255,255,255,0.8);letter-spacing:-0.817px;">Main Run</span><span id="t26" style="position:absolute;left:723.2px;top:160px;font-size:12.5px;line-height:16px;font-weight:700;color:#111;letter-spacing:-0.008px;">Manual run</span><span id="t27" style="position:absolute;left:800px;top:162px;font-size:11.6px;line-height:14px;font-weight:400;color:#6b7280;letter-spacing:-0.294px;">Jul 15, 2025 8:15 PM</span><span id="t28" style="position:absolute;left:723.3px;top:191px;font-size:12.5px;line-height:16px;font-weight:700;color:#111;letter-spacing:0.002px;">Automated run (Relaunch)</span><span id="t29" style="position:absolute;left:707.8px;top:211px;font-size:9.7px;line-height:12px;font-weight:400;color:#6b7280;letter-spacing:0.092px;;-webkit-text-stroke:0.1px #6b7280">test</span><span id="t30" style="position:absolute;left:693.4px;top:231px;font-size:11.6px;line-height:14px;font-weight:400;color:#6b7280;letter-spacing:-0.320px;">Jul 16, 2025 1:25 PM</span><span id="t31" style="position:absolute;left:1179.3px;top:211px;font-size:11.5px;line-height:14px;font-weight:400;color:#505050;letter-spacing:0.018px;;-webkit-text-stroke:0.2px #505050">Compare To</span><span id="t32" style="position:absolute;left:723.25px;top:261px;font-size:12.5px;line-height:16px;font-weight:700;color:#111;letter-spacing:-0.013px;">Manual &amp; automated run (Relaunch)</span><span id="t33" style="position:absolute;left:707.8px;top:281px;font-size:9.7px;line-height:12px;font-weight:400;color:#6b7280;letter-spacing:0.092px;;-webkit-text-stroke:0.1px #6b7280">test</span><span id="t34" style="position:absolute;left:693px;top:301px;font-size:11.6px;line-height:14px;font-weight:400;color:#6b7280;letter-spacing:-0.086px;">Aug 23, 2025 8:57 PM</span><span id="t35" style="position:absolute;left:1179.3px;top:281px;font-size:11.5px;line-height:14px;font-weight:400;color:#505050;letter-spacing:0.018px;;-webkit-text-stroke:0.2px #505050">Compare To</span><span id="t36" style="position:absolute;left:723.25px;top:330px;font-size:12.5px;line-height:16px;font-weight:700;color:#111;letter-spacing:0.005px;">test relaunch (Relaunch)</span><span id="t37" style="position:absolute;left:707.8px;top:350px;font-size:9.7px;line-height:12px;font-weight:400;color:#6b7280;letter-spacing:0.092px;;-webkit-text-stroke:0.1px #6b7280">test</span><span id="t38" style="position:absolute;left:693px;top:370px;font-size:11.6px;line-height:14px;font-weight:400;color:#6b7280;letter-spacing:-0.021px;">Aug 25, 2025 4:04 PM</span><span id="t39" style="position:absolute;left:1179.3px;top:351px;font-size:11.5px;line-height:14px;font-weight:400;color:#505050;letter-spacing:0.018px;;-webkit-text-stroke:0.2px #505050">Compare To</span><span id="t40" style="position:absolute;left:680.8px;top:407px;font-size:15.3px;line-height:19px;font-weight:400;color:#334155;letter-spacing:0.758px;;-webkit-text-stroke:0.45px #334155">Summary</span><span id="t41" style="position:absolute;left:693.4px;top:436px;font-size:12.5px;line-height:16px;font-weight:400;color:#1c1c1c;letter-spacing:0.244px;;-webkit-text-stroke:0.15px #1c1c1c">Total Tests:</span><span id="t42" style="position:absolute;left:693.2px;top:454px;font-size:9.6px;line-height:12px;font-weight:400;color:#6b7280;letter-spacing:0.090px;">All tests executed in these runs</span><span id="t43" style="position:absolute;left:1227.8px;top:443px;font-size:13px;line-height:16px;font-weight:400;color:#6b7280;letter-spacing:-1.669px;">15</span><span id="t44" style="position:absolute;left:693.4px;top:474px;font-size:12.5px;line-height:16px;font-weight:400;color:#1c1c1c;letter-spacing:0.140px;;-webkit-text-stroke:0.15px #1c1c1c">Tests in all runs:</span><span id="t45" style="position:absolute;left:693.2px;top:493px;font-size:9.6px;line-height:12px;font-weight:400;color:#6b7280;letter-spacing:0.112px;">Tests that are present in all compared runs</span><span id="t46" style="position:absolute;left:1227.8px;top:482px;font-size:13px;line-height:16px;font-weight:400;color:#f59e0b;letter-spacing:0.031px;">34</span><span id="t47" style="position:absolute;left:693px;top:513px;font-size:12.5px;line-height:16px;font-weight:400;color:#4f46e5;letter-spacing:0.293px;text-decoration:underline;text-underline-offset:2px;text-decoration-thickness:1.4px;-webkit-text-stroke:0.15px #4f46e5">Total Passed</span><span id="t48" style="position:absolute;left:693.2px;top:531px;font-size:9.6px;line-height:12px;font-weight:400;color:#6b7280;letter-spacing:0.090px;">Tests passed in all runs</span><span id="t49" style="position:absolute;left:1227.8px;top:520px;font-size:13px;line-height:16px;font-weight:400;color:#10b981;letter-spacing:0.000px;">0</span><span id="t50" style="position:absolute;left:693px;top:552px;font-size:12.5px;line-height:16px;font-weight:400;color:#4f46e5;letter-spacing:0.251px;text-decoration:underline;text-underline-offset:2px;text-decoration-thickness:1.4px;-webkit-text-stroke:0.15px #4f46e5">Total Failed</span><span id="t51" style="position:absolute;left:693.2px;top:570px;font-size:9.6px;line-height:12px;font-weight:400;color:#6b7280;letter-spacing:0.099px;">Tests failed in all runs</span><span id="t52" style="position:absolute;left:1227.8px;top:559px;font-size:13px;line-height:16px;font-weight:400;color:#ef4444;letter-spacing:0.000px;">0</span><span id="t53" style="position:absolute;left:693px;top:591px;font-size:12.5px;line-height:16px;font-weight:400;color:#4f46e5;letter-spacing:0.219px;text-decoration:underline;text-underline-offset:2px;text-decoration-thickness:1.4px;-webkit-text-stroke:0.15px #4f46e5">Flaky</span><span id="t54" style="position:absolute;left:693.2px;top:609px;font-size:9.6px;line-height:12px;font-weight:400;color:#6b7280;letter-spacing:0.142px;">Unstable tests that passed or failed in different runs</span><span id="t55" style="position:absolute;left:1227.8px;top:598px;font-size:13px;line-height:16px;font-weight:400;color:#ef4444;letter-spacing:0.000px;">4</span><span id="t56" style="position:absolute;left:693px;top:629px;font-size:12.5px;line-height:16px;font-weight:400;color:#4f46e5;letter-spacing:-0.234px;text-decoration:underline;text-underline-offset:2px;text-decoration-thickness:1.4px;-webkit-text-stroke:0.15px #4f46e5">Reviewed</span><span id="t57" style="position:absolute;left:693.2px;top:647px;font-size:9.6px;line-height:12px;font-weight:400;color:#6b7280;letter-spacing:0.131px;">Previously failing that passed in next runs</span><span id="t58" style="position:absolute;left:1227.8px;top:636px;font-size:13px;line-height:16px;font-weight:400;color:#10b981;letter-spacing:0.000px;">0</span><span id="t59" style="position:absolute;left:693px;top:668px;font-size:12.5px;line-height:16px;font-weight:400;color:#4f46e5;letter-spacing:0.335px;text-decoration:underline;text-underline-offset:2px;text-decoration-thickness:1.4px;-webkit-text-stroke:0.15px #4f46e5">Degraded</span><span id="t60" style="position:absolute;left:693.2px;top:686px;font-size:9.6px;line-height:12px;font-weight:400;color:#6b7280;letter-spacing:0.125px;">Previously passed that failed in next runs</span><span id="t61" style="position:absolute;left:1227.8px;top:675px;font-size:13px;line-height:16px;font-weight:400;color:#ef4444;letter-spacing:0.000px;">3</span>
</body></html>
